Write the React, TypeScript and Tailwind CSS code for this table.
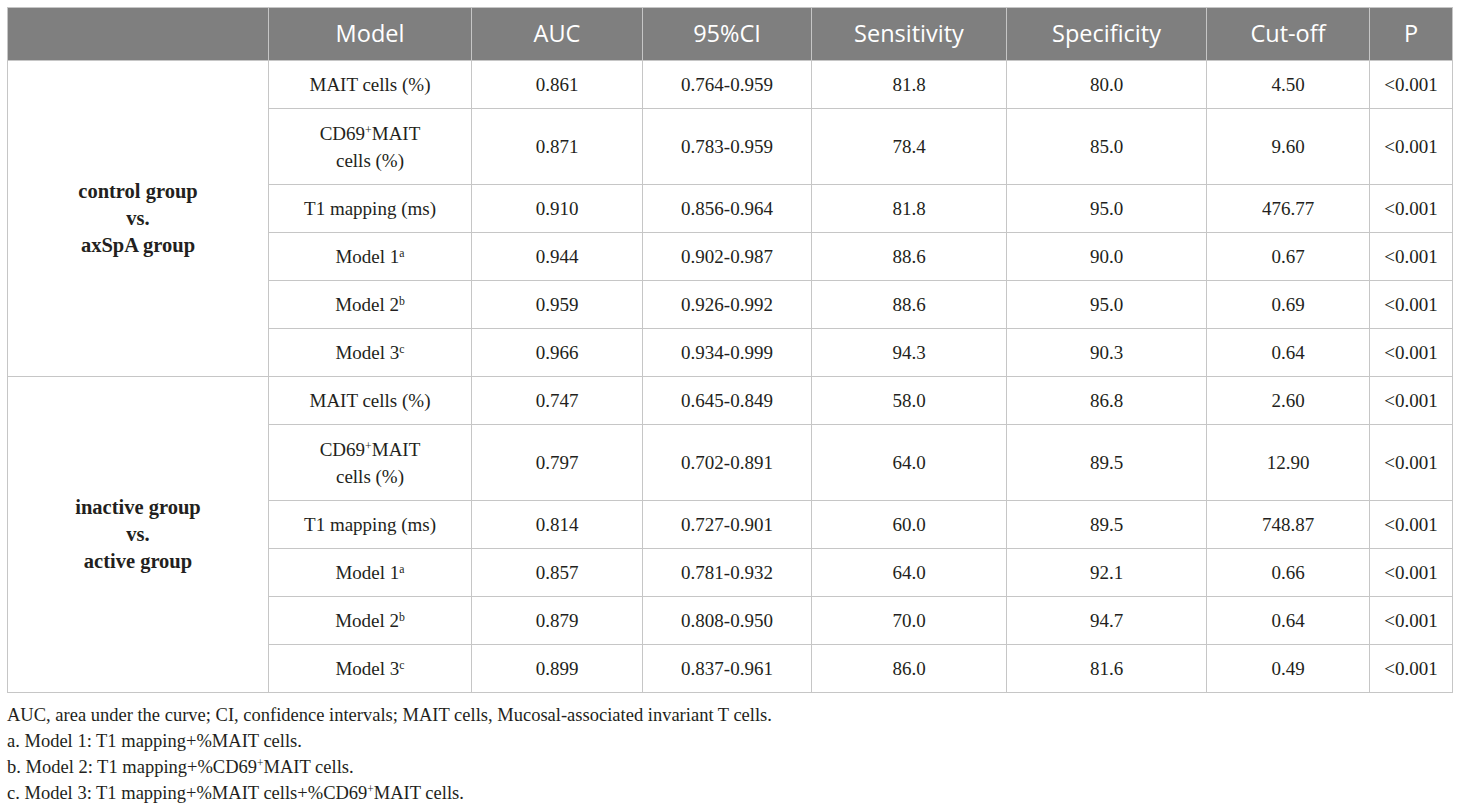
import React from 'react';

type Row = {
  model: React.ReactNode;
  tall?: boolean;
  auc: string;
  ci: string;
  sens: string;
  spec: string;
  cut: string;
  p: string;
};

const Sup = ({ children }: { children: React.ReactNode }) => (
  <sup className="text-[0.62em] relative -top-[0.5em]">{children}</sup>
);

const cd69 = (
  <>
    CD69<Sup>+</Sup>MAIT
    <br />
    cells (%)
  </>
);

const groups: { label: string[]; rows: Row[] }[] = [
  {
    label: ['control group', 'vs.', 'axSpA group'],
    rows: [
      { model: 'MAIT cells (%)', auc: '0.861', ci: '0.764-0.959', sens: '81.8', spec: '80.0', cut: '4.50', p: '<0.001' },
      { model: cd69, tall: true, auc: '0.871', ci: '0.783-0.959', sens: '78.4', spec: '85.0', cut: '9.60', p: '<0.001' },
      { model: 'T1 mapping (ms)', auc: '0.910', ci: '0.856-0.964', sens: '81.8', spec: '95.0', cut: '476.77', p: '<0.001' },
      { model: <>Model 1<Sup>a</Sup></>, auc: '0.944', ci: '0.902-0.987', sens: '88.6', spec: '90.0', cut: '0.67', p: '<0.001' },
      { model: <>Model 2<Sup>b</Sup></>, auc: '0.959', ci: '0.926-0.992', sens: '88.6', spec: '95.0', cut: '0.69', p: '<0.001' },
      { model: <>Model 3<Sup>c</Sup></>, auc: '0.966', ci: '0.934-0.999', sens: '94.3', spec: '90.3', cut: '0.64', p: '<0.001' },
    ],
  },
  {
    label: ['inactive group', 'vs.', 'active group'],
    rows: [
      { model: 'MAIT cells (%)', auc: '0.747', ci: '0.645-0.849', sens: '58.0', spec: '86.8', cut: '2.60', p: '<0.001' },
      { model: cd69, tall: true, auc: '0.797', ci: '0.702-0.891', sens: '64.0', spec: '89.5', cut: '12.90', p: '<0.001' },
      { model: 'T1 mapping (ms)', auc: '0.814', ci: '0.727-0.901', sens: '60.0', spec: '89.5', cut: '748.87', p: '<0.001' },
      { model: <>Model 1<Sup>a</Sup></>, auc: '0.857', ci: '0.781-0.932', sens: '64.0', spec: '92.1', cut: '0.66', p: '<0.001' },
      { model: <>Model 2<Sup>b</Sup></>, auc: '0.879', ci: '0.808-0.950', sens: '70.0', spec: '94.7', cut: '0.64', p: '<0.001' },
      { model: <>Model 3<Sup>c</Sup></>, auc: '0.899', ci: '0.837-0.961', sens: '86.0', spec: '81.6', cut: '0.49', p: '<0.001' },
    ],
  },
];

const headers = ['', 'Model', 'AUC', '95%CI', 'Sensitivity', 'Specificity', 'Cut-off', 'P'];
const widths = [261, 203, 171, 169, 195, 200, 163, 83];

export default function App() {
  return (
    <div className="min-h-screen bg-white pl-[7px] pt-[7px] text-[#231f20] [font-family:'Liberation_Serif',serif]">
      <table className="table-fixed border-collapse w-[1446px]">
        <colgroup>
          {widths.map((w, i) => (
            <col key={i} style={{ width: w }} />
          ))}
        </colgroup>
        <thead>
          <tr className="bg-[#7f7f7f]">
            {headers.map((h, i) => (
              <th
                key={i}
                className="h-[53px] p-0 pb-[1px] border border-[#c6c6c6] text-white font-normal text-[23.5px] text-center [font-family:'Open_Sans',sans-serif]"
              >
                {h}
              </th>
            ))}
          </tr>
        </thead>
        {groups.map((g, gi) => (
          <tbody key={gi}>
            {g.rows.map((r, ri) => {
              const h = r.tall ? 'h-[76px]' : 'h-[48px]';
              const cell = `${h} p-0 border border-[#c6c6c6] text-center text-[19px] leading-[27px]`;
              return (
                <tr key={ri}>
                  {ri === 0 && (
                    <td
                      rowSpan={g.rows.length}
                      className="p-0 border border-[#c6c6c6] text-center font-bold text-[20.5px] leading-[27px]"
                    >
                      {g.label.map((l, li) => (
                        <div key={li}>{l}</div>
                      ))}
                    </td>
                  )}
                  <td className={cell}>{r.model}</td>
                  <td className={cell}>{r.auc}</td>
                  <td className={cell}>{r.ci}</td>
                  <td className={cell}>{r.sens}</td>
                  <td className={cell}>{r.spec}</td>
                  <td className={cell}>{r.cut}</td>
                  <td className={cell}>{r.p}</td>
                </tr>
              );
            })}
          </tbody>
        ))}
      </table>
      <div className="mt-[9px] text-[18.5px] leading-[26px]">
        <p>AUC, area under the curve; CI, confidence intervals; MAIT cells, Mucosal-associated invariant T cells.</p>
        <p>a. Model 1: T1 mapping+%MAIT cells.</p>
        <p>
          b. Model 2: T1 mapping+%CD69<Sup>+</Sup>MAIT cells.
        </p>
        <p>
          c. Model 3: T1 mapping+%MAIT cells+%CD69<Sup>+</Sup>MAIT cells.
        </p>
      </div>
    </div>
  );
}
